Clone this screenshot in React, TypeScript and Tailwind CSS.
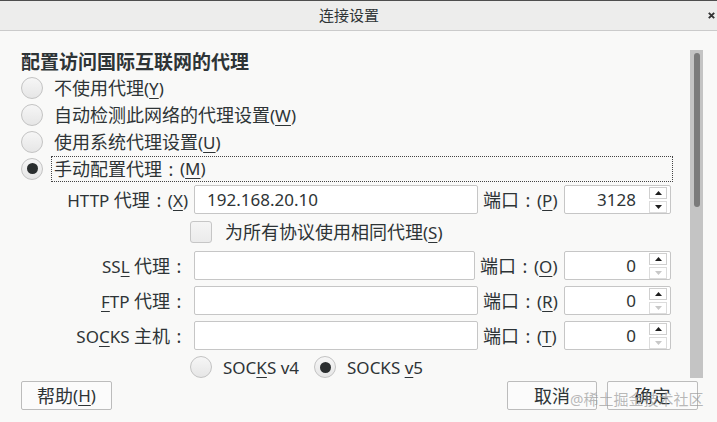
import React from 'react';

const Radio = ({ checked }: { checked?: boolean }) => (
  <span className="flex h-[22px] w-[22px] shrink-0 items-center justify-center rounded-full border border-[#c3c3c3] bg-gradient-to-b from-[#f6f6f6] to-[#e6e6e6]">
    {checked && <span className="h-[11px] w-[11px] rounded-full bg-[#2a2e2f]" />}
  </span>
);

const U = ({ children }: { children: React.ReactNode }) => (
  <span className="underline decoration-1 underline-offset-[3px]">{children}</span>
);

// CJK text runs a touch larger than the latin glyphs in the original
const C = ({ children }: { children: React.ReactNode }) => <span className="text-[18px]">{children}</span>;

const Colon = () => <span className="inline-block w-[18px] text-center text-[18px]">:</span>;

const Arrow = ({ up, dim }: { up?: boolean; dim?: boolean }) => (
  <svg width="7" height="4" viewBox="0 0 7 4">
    <path d={up ? 'M0 4 L3.5 0 L7 4 Z' : 'M0 0 L3.5 4 L7 0 Z'} fill={dim ? '#c8c8c8' : '#1e1e1e'} />
  </svg>
);

const SpinBox = ({ value, canDown }: { value: string; canDown?: boolean }) => (
  <div className="ml-[6px] flex h-[29px] w-[107px] shrink-0 items-center rounded-[2px] border border-[#c6c6c6] bg-white">
    <span className="flex-1 pr-[13px] text-right">{value}</span>
    <div className="mr-[3px] flex w-[18px] flex-col gap-[2px]">
      <span className="flex h-[12px] items-center justify-center border border-[#cfcfcf] bg-white">
        <Arrow up />
      </span>
      <span className="flex h-[12px] items-center justify-center border border-[#dcdcdc] bg-white">
        <Arrow dim={!canDown} />
      </span>
    </div>
  </div>
);

const ProxyRow = ({
  label,
  port,
  value,
  portValue,
  canDown,
  className = '',
  inputW = 'w-[284px]',
  portW = 'w-[80px]',
}: {
  label: React.ReactNode;
  port: React.ReactNode;
  value?: string;
  portValue: string;
  canDown?: boolean;
  className?: string;
  inputW?: string;
  portW?: string;
}) => (
  <div className={`flex h-[29px] items-center ${className}`}>
    <span className="w-[167px] shrink-0 whitespace-nowrap text-right">{label}</span>
    <div className={`ml-[6px] flex h-[29px] ${inputW} shrink-0 items-center rounded-[2px] border border-[#c6c6c6] bg-white pl-[12px]`}>
      {value}
    </div>
    <span className={`${portW} shrink-0 whitespace-nowrap pl-[5px]`}>{port}</span>
    <SpinBox value={portValue} canDown={canDown} />
  </div>
);

const Button = ({ children, className = '' }: { children: React.ReactNode; className?: string }) => (
  <button className={`flex h-[29px] items-center justify-center rounded-[2px] border border-[#bcbcbc] bg-[#fbfbfb] ${className}`}>
    {children}
  </button>
);

export default function App() {
  return (
    <div className="relative flex h-[422px] w-[717px] flex-col overflow-hidden bg-[#f9f9f8] font-['Noto_Sans','Noto_Sans_CJK_SC',sans-serif] text-[17px] leading-none text-[#2e3436]">
      <div className="h-[1px] bg-[#4e4e4e]" />
      <div className="relative flex h-[30px] items-center border-b border-[#cbcbcb] bg-[#ededec]">
        <span className="w-[698px] text-center text-[15px]">连接设置</span>
        <svg className="absolute left-[708px] top-[11px]" width="7" height="7" viewBox="0 0 7 7">
          <path d="M0.8 0.8 L6.2 6.2 M6.2 0.8 L0.8 6.2" stroke="#333" strokeWidth="1.9" />
        </svg>
      </div>

      <div className="flex h-[347px]">
        <div className="w-[690px] pl-[21px] pt-[19px]">
          <h2 className="h-[24px] text-[19px] font-bold leading-[24px]">配置访问国际互联网的代理</h2>
          {[
            <><C>不使用代理</C>(<U>Y</U>)</>,
            <><C>自动检测此网络的代理设置</C>(<U>W</U>)</>,
            <><C>使用系统代理设置</C>(<U>U</U>)</>,
          ].map((t, i) => (
            <div key={i} className="flex h-[27px] items-center">
              <Radio />
              <span className="ml-[8px] border border-transparent px-[2px]">{t}</span>
            </div>
          ))}
          <div className="flex h-[27px] items-center">
            <Radio checked />
            <span className="ml-[8px] flex h-[26px] w-[622px] items-center border border-dotted border-[#444] px-[2px]">
              <C>手动配置代理</C>
              <Colon />(<U>M</U>)
            </span>
          </div>

          <ProxyRow
            className="mt-[3px]"
            label={<>HTTP <C>代理</C><Colon />(<U>X</U>)</>}
            value="192.168.20.10"
            port={<><C>端口</C><Colon />(<U>P</U>)</>}
            portValue="3128"
            canDown
          />
          <div className="mt-[7px] flex h-[22px] items-center pl-[169px]">
            <span className="h-[22px] w-[22px] rounded-[3px] border border-[#c6c6c6] bg-gradient-to-b from-[#f5f5f5] to-[#ebebeb]" />
            <span className="ml-[13px]"><C>为所有协议使用相同代理</C>(<U>S</U>)</span>
          </div>
          <ProxyRow
            className="mt-[8px]"
            inputW="w-[281px]"
            portW="w-[83px]"
            label={<>SS<U>L</U> <C>代理</C><Colon /></>}
            port={<><C>端口</C><Colon />(<U>O</U>)</>}
            portValue="0"
          />
          <ProxyRow
            className="mt-[6px]"
            label={<><U>F</U>TP <C>代理</C><Colon /></>}
            port={<><C>端口</C><Colon />(<U>R</U>)</>}
            portValue="0"
          />
          <ProxyRow
            className="mt-[6px]"
            label={<>SO<U>C</U>KS <C>主机</C><Colon /></>}
            port={<><C>端口</C><Colon />(<U>T</U>)</>}
            portValue="0"
          />
          <div className="mt-[6px] flex h-[22px] items-center pl-[169px]">
            <Radio />
            <span className="ml-[11px]">SOC<U>K</U>S v4</span>
            <span className="ml-[15px]"><Radio checked /></span>
            <span className="ml-[11px]">SOCKS <U>v</U>5</span>
          </div>
        </div>
        <div className="pt-[19px]">
          <div className="h-[328px] w-[13px] bg-[#c4c4c4] pl-[4px] pt-[3px]">
            <div className="h-[154px] w-[6px] rounded-full bg-[#7b7b7b]" />
          </div>
        </div>
      </div>

      <div className="mt-[3px] flex h-[29px] items-center pl-[21px] pr-[19px]">
        <Button className="w-[91px]"><C>帮助</C>(<U>H</U>)</Button>
        <div className="flex-1" />
        <Button className="w-[90px]"><C>取消</C></Button>
        <Button className="ml-[10px] w-[91px]"><C>确定</C></Button>
      </div>

      <span className="absolute left-[570px] top-[392px] text-[15px] text-[#9a9a9a]/70">@稀土掘金技术社区</span>
    </div>
  );
}
